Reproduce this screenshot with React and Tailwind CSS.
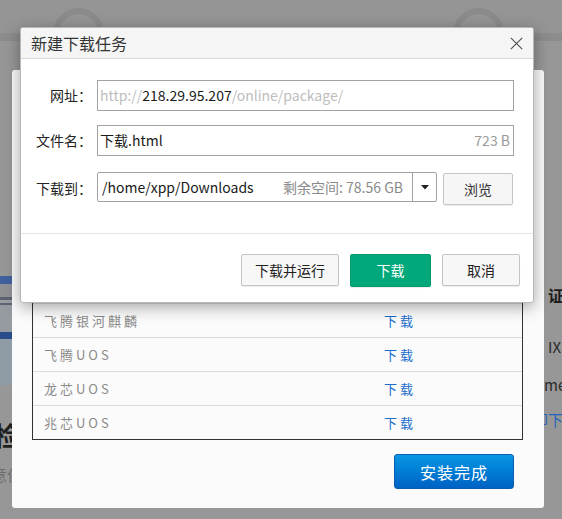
import React from 'react';

const font = { fontFamily: '"Noto Sans CJK SC", "Noto Sans", sans-serif' };

const systems = ['飞腾银河麒麟', '飞腾UOS', '龙芯UOS', '兆芯UOS'];

function Ring() {
  return <div className="w-[51px] h-[51px] rounded-full border-[6px] border-[#8b8b8b] shrink-0" />;
}

function PageBehind() {
  return (
    <div className="h-full flex flex-col">
      <div className="h-[33px] bg-[#959595] flex pl-[53px] gap-[349px] pt-[8px]">
        <Ring />
        <Ring />
      </div>
      <div className="h-[8px] bg-[#8c8c8c]" />
      <div className="flex-1 flex justify-between bg-[#979797]">
        <div className="w-[14px] overflow-hidden flex flex-col pt-[235px]">
          <div className="h-[8px] bg-[#41609e]" />
          <div className="h-[13px] bg-[#8f9094]" />
          <div className="h-[3px] bg-[#5c6272]" />
          <div className="h-[3px] bg-[#9a9da2]" />
          <div className="h-[2px] bg-[#5e6474]" />
          <div className="h-[27px] bg-[#969ba1]" />
          <div className="h-[7px] bg-[#2b4c8a]" />
          <div className="h-[46px] bg-[#909ca5]" />
          <div className="h-[36px]" />
          <div className="text-[26px] leading-[28px] font-bold text-[#1e1e1e] whitespace-nowrap -ml-[6px]">检</div>
          <div className="mt-[17px] text-[15px] leading-[18px] text-[#6e6e6e] whitespace-nowrap -ml-[8px]">意保</div>
        </div>
        <div className="w-[24px] overflow-hidden flex flex-col pt-[245px] text-[#2a2a2a] whitespace-nowrap">
          <div className="pl-[10px] text-[16px] leading-[18px] font-bold text-[#1c1c1c]">证书</div>
          <div className="mt-[34px] pl-[10px] text-[15px] leading-[18px]">IX</div>
          <div className="mt-[20px] -ml-[3px] text-[15px] leading-[18px]">ome</div>
          <div className="mt-[17px] -ml-[5px] text-[15px] leading-[18px] text-[#2563b8]">即下载</div>
        </div>
      </div>
    </div>
  );
}

function BackModal() {
  return (
    <div className="absolute left-[12px] top-[70px] w-[532px] h-[438px] bg-[#fbfbfb] rounded-[3px] flex flex-col px-[20px] pt-[164px]">
      <div className="w-[491px] border border-[#333333]">
        {['系统', '飞腾银河麒麟 V10', ...systems].map((name, i) => (
          <div
            key={i}
            className={`grid grid-cols-[351px_1fr] h-[34px] items-center text-[13px] tracking-[3px] ${i > 0 ? 'border-t border-[#dcdcdc]' : ''}`}
          >
            <span className="pl-[11px] text-[#8a8a8a]">{name}</span>
            <span className="text-[#1a6dcc]">下载</span>
          </div>
        ))}
      </div>
      <div className="flex justify-end pr-[10px] mt-[14px]">
        <button className="w-[120px] h-[35px] rounded-[3px] border border-[#0a5eb0] bg-gradient-to-b from-[#0a97e3] to-[#0062c4] text-white text-[16px] tracking-[1px]">
          安装完成
        </button>
      </div>
    </div>
  );
}

function Field({ label, children, className = '' }) {
  return (
    <div className={`flex items-center ${className}`}>
      <div className="w-[71px] text-right text-[14px] text-[#222]">{label}</div>
      <div className="ml-[5px] flex-1 flex">{children}</div>
    </div>
  );
}

function Btn({ children, className = '' }) {
  return (
    <button className={`h-[32px] rounded-[2px] border text-[14px] shadow-[0_1px_1px_rgba(0,0,0,0.08)] ${className}`}>
      {children}
    </button>
  );
}

function Dialog() {
  return (
    <div className="absolute left-[20px] top-[27px] w-[514px] h-[276px] bg-white border border-[#b8b8b8] rounded-[3px] shadow-[0_4px_16px_rgba(0,0,0,0.35)] flex flex-col overflow-hidden">
      <div className="h-[31px] shrink-0 bg-[#f5f5f5] border-b border-[#d9d9d9] flex items-center justify-between pl-[10px] pr-[10px]">
        <span className="text-[16px] text-[#333]">新建下载任务</span>
        <svg width="13" height="13" viewBox="0 0 13 13" className="mt-[1px]">
          <path d="M0.8 0.8L12.2 12.2M12.2 0.8L0.8 12.2" stroke="#555" strokeWidth="1.2" fill="none" />
        </svg>
      </div>
      <div className="pr-[19px] pt-[21px]">
        <Field label="网址：">
          <div className="flex-1 h-[31px] border border-[#a3a3a3] flex items-center pl-[2px] text-[14px] whitespace-nowrap">
            <span className="text-[#bdbdbd]">http://</span>
            <span className="text-[#1a1a1a]">218.29.95.207</span>
            <span className="text-[#bdbdbd]">/online/package/</span>
          </div>
        </Field>
        <Field label="文件名：" className="mt-[14px]">
          <div className="flex-1 h-[31px] border border-[#a3a3a3] flex items-center justify-between pl-[2px] pr-[3px] text-[14px]">
            <span className="text-[#1a1a1a]">下载.html</span>
            <span className="text-[#9a9a9a]">723 B</span>
          </div>
        </Field>
        <Field label="下载到：" className="mt-[16px]">
          <div className="w-[340px] h-[30px] border border-[#a3a3a3] rounded-[2px] flex text-[14px]">
            <div className="flex-1 flex items-center justify-between pl-[4px] pr-[9px]">
              <span className="text-[#1a1a1a]">/home/xpp/Downloads</span>
              <span className="text-[#8a8a8a]">剩余空间: 78.56 GB</span>
            </div>
            <div className="w-[24px] border-l border-[#a3a3a3] flex items-center justify-center">
              <svg width="8" height="5" viewBox="0 0 8 5">
                <path d="M0 0H8L4 4.5Z" fill="#222" />
              </svg>
            </div>
          </div>
          <Btn className="ml-[6px] w-[70px] h-[29px] mt-[1px] bg-[#f6f6f6] border-[#c6c6c6] text-[#333]">浏览</Btn>
        </Field>
      </div>
      <div className="mt-[28px] border-t border-[#e6e6e6]" />
      <div className="flex justify-end gap-[11px] pr-[13px] pt-[20px]">
        <Btn className="w-[98px] bg-[#f7f7f7] border-[#c4c4c4] text-[#222]">下载并运行</Btn>
        <Btn className="w-[81px] h-[33px] bg-[#01a87a] border-[#019a6f] text-white">下载</Btn>
        <Btn className="w-[78px] bg-[#f7f7f7] border-[#c4c4c4] text-[#222]">取消</Btn>
      </div>
    </div>
  );
}

export default function App() {
  return (
    <div className="relative w-[562px] h-[519px] overflow-hidden bg-[#979797]" style={font}>
      <PageBehind />
      <BackModal />
      <Dialog />
    </div>
  );
}
